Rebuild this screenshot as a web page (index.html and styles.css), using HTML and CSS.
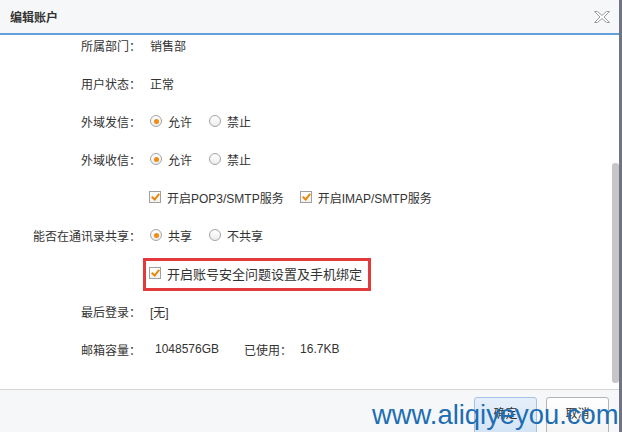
FILE: index.html
```html
<!DOCTYPE html>
<html lang="zh-CN">
<head>
  <meta charset="UTF-8" />
  <title>编辑账户</title>
  <link rel="stylesheet" href="styles.css">
</head>
<body>
  <div class="dialog">
    <div class="dialog-head">
      <span class="dialog-title">编辑账户</span>
      <svg class="close" width="16" height="12" viewBox="0 0 16 12">
        <polygon points="0.5,0.5 3.5,0.5 8,4.5 12.5,0.5 15.5,0.5 10,6 15.5,11.5 12.5,11.5 8,7.5 3.5,11.5 0.5,11.5 6,6" fill="#fff" stroke="#9c9c9c" stroke-width="1"/>
      </svg>
    </div>

    <div class="dialog-body">
      <div class="form">
        <div class="row">
          <span class="label">所属部门：</span>
          <span class="value">销售部</span>
        </div>
        <div class="row">
          <span class="label">用户状态：</span>
          <span class="value">正常</span>
        </div>
        <div class="row">
          <span class="label">外域发信：</span>
          <span class="value options">
            <span class="opt"><span class="radio checked"></span>允许</span>
            <span class="opt"><span class="radio"></span>禁止</span>
          </span>
        </div>
        <div class="row">
          <span class="label">外域收信：</span>
          <span class="value options">
            <span class="opt"><span class="radio checked"></span>允许</span>
            <span class="opt"><span class="radio"></span>禁止</span>
          </span>
        </div>
        <div class="row">
          <span class="label"></span>
          <span class="value options">
            <span class="opt"><span class="check"></span>开启POP3/SMTP服务</span>
            <span class="opt"><span class="check"></span>开启IMAP/SMTP服务</span>
          </span>
        </div>
        <div class="row">
          <span class="label">能否在通讯录共享：</span>
          <span class="value options">
            <span class="opt"><span class="radio checked"></span>共享</span>
            <span class="opt"><span class="radio"></span>不共享</span>
          </span>
        </div>
        <div class="row row-marked">
          <span class="label"></span>
          <span class="value options">
            <span class="opt opt-wide"><span class="check"></span>开启账号安全问题设置及手机绑定</span>
          </span>
        </div>
        <div class="row">
          <span class="label">最后登录：</span>
          <span class="value">[无]</span>
        </div>
        <div class="row">
          <span class="label">邮箱容量：</span>
          <span class="value">
            <span class="num">1048576GB</span>
            <span class="used">已使用：</span>
            <span class="num-used">16.7KB</span>
          </span>
        </div>
      </div>
      <div class="scroll-track"><div class="scroll-thumb"></div></div>
    </div>

    <div class="dialog-foot">
      <button class="btn btn-ok">确定</button>
      <button class="btn">取消</button>
    </div>

    <div class="watermark">www.aliqiyeyou.com</div>
  </div>
</body>
</html>
```

FILE: styles.css
```css
body {
  margin: 0;
  width: 622px;
  height: 432px;
  overflow: hidden;
  background: #fff;
  font-family: 'Liberation Sans', 'Noto Sans CJK SC', sans-serif;
  font-size: 12px;
  color: #333;
}

.dialog {
  position: relative;
  width: 619px;
  height: 432px;
  border-right: 3px solid #6f7483;
  display: flex;
  flex-direction: column;
  overflow: hidden;
}

.dialog-head {
  height: 33px;
  flex: none;
  background: #f6f7f9;
  border-bottom: 2px solid #629fdd;
  display: flex;
  align-items: center;
  justify-content: space-between;
  padding: 0 9px 0 10px;
}

.dialog-title {
  font-size: 12px;
  font-weight: bold;
  color: #333;
}

.close {
  display: block;
  margin-top: 1px;
}

.dialog-body {
  flex: 1;
  display: flex;
  min-height: 0;
}

.form {
  flex: 1;
  display: flex;
  flex-direction: column;
  gap: 18px;
}

.row {
  height: 20px;
  flex: none;
  display: flex;
  align-items: center;
}

.label {
  width: 141px;
  flex: none;
  text-align: right;
}

.value {
  margin-left: 9px;
  display: flex;
  align-items: center;
}

.options {
  gap: 17px;
}

.opt {
  display: flex;
  align-items: center;
  gap: 6px;
}

.opt-wide {
  font-size: 13px;
}

.radio {
  width: 10px;
  height: 10px;
  border: 1px solid #a4a4a4;
  border-radius: 50%;
  background: linear-gradient(#fff, #ececec);
  display: flex;
  align-items: center;
  justify-content: center;
}

.radio.checked::after {
  content: '';
  width: 5px;
  height: 5px;
  border-radius: 50%;
  background: #f08c10;
}

.check {
  position: relative;
  width: 10px;
  height: 10px;
  margin-left: -1px;
  border: 1px solid #a0a0a0;
  background: linear-gradient(#fff, #f1f1f1);
}

.check::after {
  content: '';
  position: absolute;
  left: 3px;
  top: 0;
  width: 3px;
  height: 6px;
  border-right: 2px solid #e8890c;
  border-bottom: 2px solid #e8890c;
  transform: rotate(40deg);
}

/* red annotation frame */
.row-marked {
  position: relative;
}

.row-marked::after {
  content: '';
  position: absolute;
  left: 143px;
  top: -5px;
  width: 222px;
  height: 27px;
  border: 3px solid #e23a3c;
}

.num {
  margin-left: 5px;
}

.used {
  margin-left: 25px;
}

.num-used {
  margin-left: 8px;
}

.scroll-track {
  width: 10px;
  flex: none;
}

.scroll-thumb {
  width: 7px;
  height: 220px;
  margin: 128px 0 0 3px;
  border-radius: 3px;
  background: #c6c6c6;
}

.dialog-foot {
  box-sizing: border-box;
  height: 43px;
  flex: none;
  border-top: 1px solid #d6d6d6;
  background: #f6f7f9;
  display: flex;
  justify-content: flex-end;
  align-items: flex-start;
  gap: 9px;
  padding: 7px 10px 0 0;
}

.btn {
  width: 63px;
  height: 40px;
  flex: none;
  padding: 0 0 10px;
  border: 1px solid #b4b4b4;
  border-radius: 3px;
  background: linear-gradient(#fff, #f2f2f2);
  font-family: 'Liberation Sans', 'Noto Sans CJK SC', sans-serif;
  font-size: 12px;
  color: #333;
}

.btn-ok {
  border-color: #a3c2e4;
  background: linear-gradient(#e6effa, #d3e3f5);
}

.watermark {
  position: absolute;
  left: 372px;
  top: 401px;
  font-family: 'Liberation Sans', sans-serif;
  font-size: 27.4px;
  line-height: 28px;
  color: #1d6db3;
  white-space: nowrap;
}
```
